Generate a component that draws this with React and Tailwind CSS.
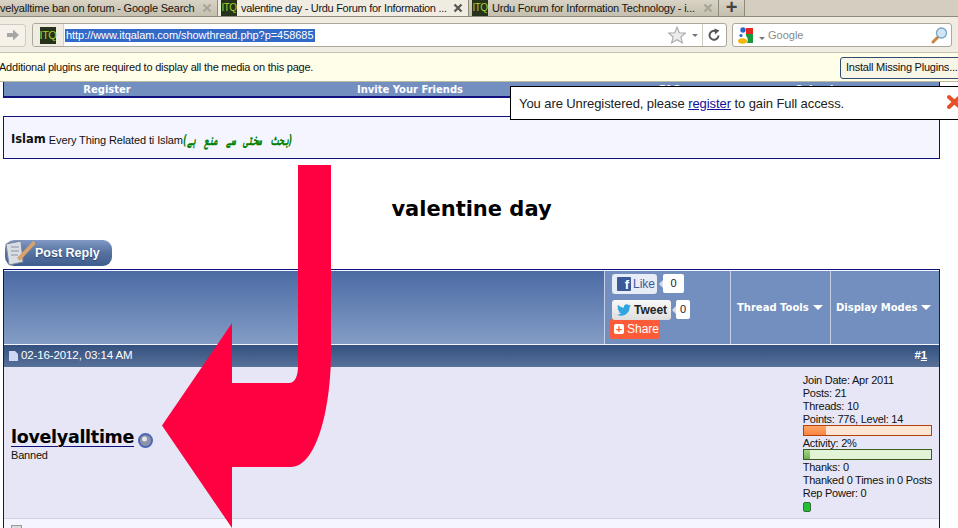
import React from "react";
import { FaTwitter } from "react-icons/fa";

const Arial = "font-['Liberation_Sans',Arial,sans-serif]";
const Verdana = "font-['DejaVu_Sans',Verdana,sans-serif]";

function Itq({ className = "" }) {
  return (
    <span className={"flex shrink-0 items-center justify-center bg-[#26331a] text-[#a4d12a] leading-none tracking-[-0.5px] " + className}>ITQ</span>
  );
}

function Close({ active }) {
  return (
    <svg width="10" height="10" viewBox="0 0 10 10" className="shrink-0">
      <path d="M1.5 1.5 L8.5 8.5 M8.5 1.5 L1.5 8.5" stroke={active ? "#555" : "#a8a497"} strokeWidth="2.2" />
    </svg>
  );
}

function Tab({ active, width, icon, children, pad = "pl-[3px]", track = "tracking-[-0.05px]" }) {
  return (
    <div
      className={"flex h-full shrink-0 items-center pr-[5px] border-r border-[#8d8a7c] " + pad + " " + (active ? "bg-[#f1ece2] h-[18px]" : "bg-gradient-to-b from-[#d8d3c4] to-[#c4bfae]")}
      style={{ width }}
    >
      {icon && <Itq className="mr-[4px] h-[16px] w-[16px] text-[10px]" />}
      <span className={"flex-1 whitespace-nowrap text-[11px] text-[#151515] " + track}>{children}</span>
      <Close active={active} />
    </div>
  );
}

function Star() {
  return (
    <svg width="18" height="18" viewBox="0 0 16 16">
      <path d="M8 1 L10 6 L15.500 6.300 L11.400 9.800 L12.800 15 L8 12.200 L3.200 15 L4.600 9.800 L0.500 6.300 L6 6 Z" fill="#ececec" stroke="#a9a9a9" />
    </svg>
  );
}

function Reload() {
  return (
    <svg width="14" height="14" viewBox="0 0 14 14" fill="none">
      <path d="M11.500 7.500 A4.500 4.500 0 1 1 8.500 3" stroke="#555" strokeWidth="2" />
      <path d="M7.500 0.500 L12.500 2.500 L8 6.500 Z" fill="#555" />
    </svg>
  );
}

function Google() {
  return (
    <svg width="16" height="17" viewBox="0 0 16 17">
      <rect x="8" y="1" width="7" height="6" fill="#e4291f" />
      <path d="M8 7 H15 V16 H9 Q11 12 8 9 Z" fill="#169b3c" />
      <circle cx="5" cy="3" r="2.700" fill="#2a63cb" />
      <circle cx="3" cy="8.500" r="1.600" fill="#2a63cb" />
      <ellipse cx="4.500" cy="14" rx="4.500" ry="2.800" fill="#f2b80f" />
    </svg>
  );
}

function Lens() {
  return (
    <svg width="17" height="17" viewBox="0 0 17 17">
      <path d="M7 10 L2 15" stroke="#c98542" strokeWidth="3" strokeLinecap="round" />
      <circle cx="10.500" cy="6" r="5" fill="#cfe6f7" stroke="#7aa3c6" strokeWidth="1.300" />
    </svg>
  );
}

function Caret({ color = "#777", size = 3 }) {
  return <span className="inline-block h-0 w-0 border-x-transparent border-b-0" style={{ borderLeftWidth: size, borderRightWidth: size, borderTopWidth: size, borderTopColor: color, borderLeftColor: "transparent", borderRightColor: "transparent", borderStyle: "solid" }} />;
}

function Arrow() {
  return (
    <svg className="absolute left-0 top-0 pointer-events-none" width="958" height="528" viewBox="0 0 958 528">
      <path
        d="M298 165 L331 165 L331 352 C331 410 316 467 291 467 L232 467 L232 528 L162 425.500 L232 323 L232 383 L289 383 C295 383 298 376 298 366 Z"
        fill="#ff0040"
      />
    </svg>
  );
}

function Meter({ border, bg, fill, width }) {
  return (
    <div className={"mt-[-1px] mb-px h-[11px] w-[129px] border " + border + " " + bg}>
      <div className={"h-full " + fill} style={{ width }} />
    </div>
  );
}

function Menu({ width, pad, children }) {
  return (
    <div className={"flex h-full shrink-0 items-center gap-[4px] border-l border-[#c5d0e4] text-white " + pad} style={{ width }}>
      <span className={Verdana + " whitespace-nowrap text-[10px] font-bold"}>{children}</span>
      <Caret color="#fff" size={5} />
    </div>
  );
}

function Count({ className, children }) {
  return (
    <span className={"relative flex h-[19px] items-center justify-center rounded-[2px] bg-white text-[11px] text-[#222] " + className}>
      <span className="absolute left-[-4px] top-[6px] h-0 w-0 border-y-[4px] border-r-[4px] border-y-transparent border-r-[#d8dee9]" />
      {children}
    </span>
  );
}

function Line({ children }) {
  return <div className="h-[13px] leading-[13px] whitespace-nowrap">{children}</div>;
}

export default function App() {
  return (
    <div className={"relative h-[528px] w-[958px] overflow-hidden bg-white " + Arial}>
      {/* tabs */}
      <div className="flex h-[17px] items-start border-b border-[#8d8a7c] bg-[#d3cebf]">
        <Tab width={218} pad="pl-0" track="tracking-[-0.2px]">velyalltime ban on forum - Google Search</Tab>
        <Tab active width={251} icon track="tracking-[-0.3px]">valentine day - Urdu Forum for Information ...</Tab>
        <Tab width={250} icon track="tracking-[-0.22px]">Urdu Forum for Information Technology - i...</Tab>
        <div className="flex h-full w-[26px] items-center justify-center border-r border-[#8d8a7c] bg-gradient-to-b from-[#d8d3c4] to-[#c4bfae] pb-[2px] text-[20px] font-bold leading-none text-[#444]">+</div>
      </div>
      {/* nav */}
      <div className="flex h-[36px] items-center border-b border-[#c6c2b6] bg-[#f1ece2] pt-[1px]">
        <div className="flex h-[23px] w-[26px] items-center justify-center rounded-r-[4px] border border-l-0 border-[#cfcbc0] bg-[#f6f2ea]">
          <svg width="14" height="12" viewBox="0 0 14 12"><path d="M1 4 H7 V0.500 L13 6 L7 11.500 V8 H1 Z" fill="#a6a6a6" /></svg>
        </div>
        <div className="ml-[6px] flex h-[24px] w-[695px] items-center rounded-[3px] border border-[#aaa79d] bg-white">
          <div className="flex h-full w-[31px] items-center justify-center rounded-l-[3px] border-r border-[#d4d0c6] bg-[#f1ece2]">
            <Itq className="h-[17px] w-[16px] text-[11px]" />
          </div>
          <span className="ml-[1px] whitespace-nowrap bg-[#3169c6] px-[1px] text-[11px] leading-[13px] tracking-[-0.05px] text-white">http://www.itqalam.com/showthread.php?p=458685</span>
          <div className="ml-auto flex items-center gap-[6px] pr-[5px]">
            <Star />
            <Caret />
            <span className="ml-[-2px] mr-[-2px] h-[22px] w-px bg-[#cfcbc0]" />
            <Reload />
          </div>
        </div>
        <div className="ml-[5px] flex h-[24px] w-[220px] items-center rounded-[3px] border border-[#aaa79d] bg-white pl-[5px] pr-[3px]">
          <Google />
          <span className="ml-[5px]"><Caret /></span>
          <span className="ml-[3px] text-[11px] text-[#8a8a8a]">Google</span>
          <span className="ml-auto"><Lens /></span>
        </div>
      </div>
      {/* plugins bar */}
      <div className="flex h-[29px] items-center justify-between border-b border-[#bdbb9f] bg-[#fffee8] pt-px text-[11px] tracking-[-0.22px] text-[#111]">
        <span className="ml-[-1px] whitespace-nowrap">Additional plugins are required to display all the media on this page.</span>
        <span className="mr-[-6px] flex h-[22px] w-[124px] items-center rounded-[3px] border border-[#2f4d70] bg-[#f7f5e6] pl-[5px] whitespace-nowrap">Install Missing Plugins...</span>
      </div>

      {/* page */}
      <div className="ml-[3px] w-[937px]">
        <div className={"flex h-[16px] items-center border-x border-b-2 border-[#10107e] bg-[#738fbf] pt-px text-[10px] font-bold text-white " + Verdana}>
          <span className="w-[206px] text-center">Register</span>
          <span className="w-[400px] text-center">Invite Your Friends</span>
          <span className="w-[120px] text-center">FAQ</span>
          <span className="w-[180px] text-center">Calendar</span>
        </div>

        <div className="mt-[18px] flex h-[43px] items-center border border-[#10107e] bg-[#f5f5ff] pl-[7px] pt-[5px] text-[#111]">
          <span className={Verdana + " text-[11.500px] font-bold"}>Islam</span>
          <span className="ml-[3px] text-[11px] tracking-[-0.12px]">Every Thing Related ti Islam</span>
          <span dir="rtl" className={"origin-left scale-x-[0.58] text-[14px] font-bold italic text-[#008000] [word-spacing:9px] " + Verdana}>(بحث سختی سے منع ہے)</span>
        </div>

        <h1 className={"mt-[36px] h-[28px] text-center text-[21px] leading-[28px] font-bold text-black " + Verdana}>valentine day</h1>

        <div className="relative ml-[2px] mt-[17px] flex h-[26px] w-[107px] items-center rounded-[9px] bg-gradient-to-b from-[#8199c4] via-[#55719f] to-[#3e5d8e] pl-[30px] text-[12.500px] font-bold text-white [text-shadow:0_1px_1px_#28406a]">
          <svg className="absolute left-0 top-0" width="30" height="26" viewBox="0 0 30 26">
            <path d="M1 4 L16 1 L18 22 L4 25 Z" fill="#d9dde4" stroke="#7a8598" />
            <path d="M6 7 H14 M6 11 H14 M6 15 H13" stroke="#8a93a3" />
            <path d="M12 18 L28 1 L31 3 L15 21 Z" fill="#d7a36a" />
          </svg>
          Post Reply
        </div>

        {/* thread table */}
        <div className="mt-[3px] h-[260px] border-x border-t border-[#10107e] bg-[#f5f5ff]">
          <div className="mt-px flex h-[73px] bg-[#738fbf]">
            <div className="h-full w-[600px] bg-gradient-to-b from-[#4c6ba4] to-[#849dc6]" />
            <div className="relative h-full w-[126px] shrink-0 border-l border-[#c5d0e4] pl-[7px]">
              <div className="flex h-[29px] items-start pt-[3px]">
                <span className="flex h-[20px] w-[45px] items-center gap-[2px] rounded-[3px] bg-[#e7ecf6] pl-[5px] text-[12px] text-[#3b5998]">
                  <span className="flex h-[14px] w-[14px] items-end justify-end rounded-[1px] bg-[#3b5998] pr-[2px] text-[13px] font-bold leading-[13px] text-white">f</span>
                  Like
                </span>
                <Count className="ml-[6px] w-[21px]">0</Count>
              </div>
              <div className="flex h-[19px] items-center">
                <span className="flex h-[20px] w-[59px] items-center gap-[3px] rounded-[3px] bg-gradient-to-b from-[#f8f8f8] to-[#dedede] pl-[5px] text-[12px] font-bold text-[#222]">
                  <FaTwitter className="h-[14px] w-[14px] shrink-0 text-[#2fa6dd]" />
                  Tweet
                </span>
                <Count className="ml-[5px] w-[14px]">0</Count>
              </div>
              <div className="ml-[-2px] flex h-[20px] w-[50px] items-center gap-[3px] rounded-[2px] bg-[#fb5b38] pl-[4px] text-[12px] text-white">
                <span className="flex h-[10px] w-[10px] items-center justify-center rounded-[2px] bg-white text-[11px] font-bold leading-none text-[#fb5b38]">+</span>
                Share
              </div>
            </div>
            <Menu width={100} pad="pl-[6px]">Thread Tools</Menu>
            <Menu width={109} pad="pl-[5px]">Display Modes</Menu>
          </div>

          <div className="mt-px flex h-[22px] items-center justify-between bg-gradient-to-b from-[#33507f] to-[#587199] pl-[5px] pr-[12px] text-[11.500px] tracking-[-0.12px] text-white">
            <span className="flex items-center gap-[3px]">
              <svg width="9" height="10" viewBox="0 0 9 10"><path d="M0 0 H6 L9 3 V10 H0 Z" fill="#cdd9f2" /></svg>
              02-16-2012, 03:14 AM
            </span>
            <span className="font-bold">#<span className="underline">1</span></span>
          </div>

          <div className="flex h-[152px] items-start justify-between border-b border-[#d2d2e2] bg-[#e6e6f6] pl-[7px]">
            <div className="pt-[60px]">
              <div className="flex items-center">
                <span className={Verdana + " text-[17.500px] leading-[21px] font-bold tracking-[-0.3px] text-black underline decoration-[#10107e] decoration-1 underline-offset-[3px]"}>lovelyalltime</span>
                <svg className="ml-[4px] mt-[5px]" width="15" height="15" viewBox="0 0 15 15">
                  <circle cx="7.500" cy="7.500" r="6.500" fill="#8d93a8" stroke="#4b67b5" strokeWidth="2" />
                  <circle cx="6.500" cy="6" r="2.500" fill="#e3e5ea" />
                </svg>
              </div>
              <div className="mt-[-1px] text-[11px] tracking-[-0.2px] text-[#111]">Banned</div>
            </div>
            <div className="pr-[7px] pt-[7px] text-[11px] tracking-[-0.25px] text-[#111]">
              <Line>Join Date: Apr 2011</Line>
              <Line>Posts: 21</Line>
              <Line>Threads: 10</Line>
              <Line>Points: 776, Level: 14</Line>
              <Meter border="border-[#b53f05]" bg="bg-[#ffe5d3]" fill="bg-gradient-to-b from-[#ffa56a] to-[#f9843c]" width={22} />
              <Line>Activity: 2%</Line>
              <Meter border="border-[#3c5a1e]" bg="bg-[#e3f4d6]" fill="bg-gradient-to-b from-[#a5d68a] to-[#6fb04e]" width={6} />
              <Line>Thanks: 0</Line>
              <Line>Thanked 0 Times in 0 Posts</Line>
              <Line>Rep Power: 0</Line>
              <div className="mt-[2px] h-[10px] w-[8px] rounded-[2px] border border-[#3c6e3c] bg-[#22c033]" />
            </div>
          </div>

          <div className="flex items-start pl-[7px] pt-[6px]">
            <span className="h-[12px] w-[11px] border border-[#9a9a9a] bg-[#dcdcdc]" />
            <span className={Verdana + " ml-[12px] mt-[2px] text-[11px] leading-[14px] font-bold text-black"}>valentine day</span>
          </div>
        </div>
      </div>

      {/* unregistered popup */}
      <div className="absolute left-[510px] top-[86px] flex h-[34px] w-[460px] items-center border border-black bg-white pl-[8px] pt-px text-[13px] tracking-[-0.08px] text-[#222]">
        You are Unregistered, please&nbsp;<span className="text-[#10109a] underline">register</span>&nbsp;to gain Full access.
        <svg className="absolute left-[436px] top-[7px]" width="16" height="16" viewBox="0 0 16 16">
          <path d="M2 3 L13 13 M13 3 L2 13" stroke="#e8502a" strokeWidth="4" strokeLinecap="round" />
        </svg>
      </div>

      <Arrow />
    </div>
  );
}
